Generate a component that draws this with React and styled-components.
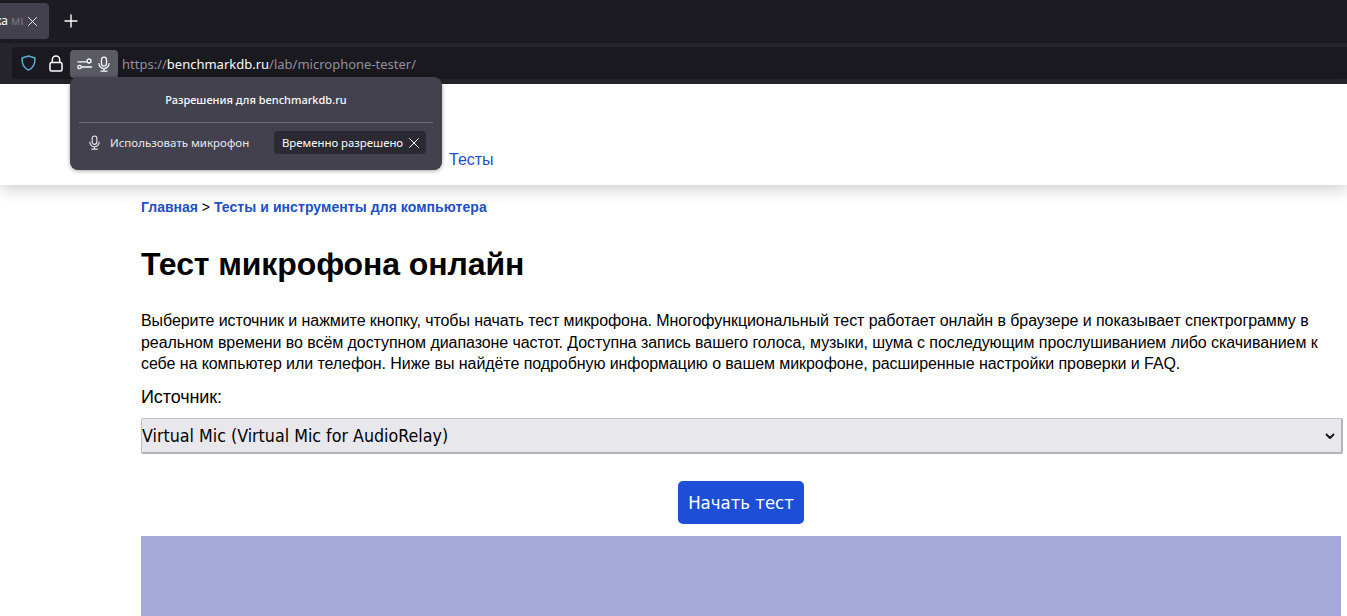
import React from "react";
import styled, { createGlobalStyle } from "styled-components";

const Global = createGlobalStyle`
  html, body { margin: 0; padding: 0; height: 100%; background: #fff; overflow: hidden; }
  body { font-family: "Liberation Sans", Arial, sans-serif; color: #000; }
  * { box-sizing: border-box; }
`;

const Page = styled.div`
  position: relative;
  width: 1347px;
  height: 616px;
  overflow: hidden;
`;

const Chrome = styled.div`
  height: 84px;
  background: #1c1b22;
  display: flex;
  flex-direction: column;
  font-family: "Noto Sans", sans-serif;
`;

const TabStrip = styled.div`
  height: 43px;
  display: flex;
  align-items: center;
  gap: 14px;
  padding-bottom: 1px;
`;

const Tab = styled.div`
  width: 49px;
  height: 36px;
  background: #42414d;
  border-radius: 0 4px 4px 0;
  display: flex;
  align-items: center;
  justify-content: flex-end;
  padding-right: 12px;
  gap: 5px;
  color: #fbfbfe;
  font-size: 12px;
  line-height: 16px;
  overflow: hidden;
  white-space: nowrap;
`;

const TabText = styled.span`
  flex-shrink: 0;
  display: flex;
  align-items: baseline;
  gap: 3px;
`;

const Fade = styled.span`
  display: block;
  width: 12px;
  overflow: hidden;
  color: #77767f;
`;

const PlusButton = styled.div`
  width: 16px;
  height: 16px;
  color: #fbfbfe;
  display: flex;
`;

const Toolbar = styled.div`
  height: 41px;
  background: #26252d;
  padding: 4px 0 5px 12px;
`;

const UrlBar = styled.div`
  height: 32px;
  background: #1a1920;
  border-radius: 4px 0 0 4px;
  display: flex;
  align-items: center;
  padding-left: 8px;
  font-size: 13px;
`;

const IconSlot = styled.span`
  display: flex;
  width: ${(p) => p.$w}px;
  padding-left: ${(p) => p.$shift || 0}px;
  justify-content: center;
  color: #fbfbfe;
`;

const PermButton = styled.div`
  width: 48px;
  height: 28px;
  margin: 2px 4px 0 0;
  background: #5b5b66;
  border-radius: 4px;
  display: flex;
  align-items: center;
  justify-content: space-around;
  padding: 0 4px 0 5px;
  color: #fbfbfe;
`;

const Url = styled.div`
  color: #8f8f9d;
  white-space: nowrap;
  padding-top: 1px;
`;

const Host = styled.span`
  color: #fbfbfe;
`;

const Popup = styled.div`
  position: absolute;
  left: 70px;
  top: 77px;
  width: 372px;
  height: 93px;
  background: #42414d;
  border-radius: 8px;
  box-shadow: 0 1px 4px rgba(0, 0, 0, 0.35);
  color: #fbfbfe;
  font-family: "Noto Sans", sans-serif;
  padding: 0 9px;
  display: flex;
  flex-direction: column;
`;

const PopupTitle = styled.div`
  height: 46px;
  border-bottom: 1px solid #6e6d78;
  display: flex;
  align-items: center;
  justify-content: center;
  font-size: 11px;
  font-weight: 500;
`;

const PopupRow = styled.div`
  flex: 1;
  display: flex;
  align-items: center;
  padding: 0 7px 8px 8px;
  font-size: 11.5px;
  justify-content: space-between;
`;

const PermLabel = styled.div`
  display: flex;
  align-items: center;
  gap: 8px;
  color: #e8e8ee;
`;

const PermState = styled.div`
  width: 152px;
  height: 23px;
  background: #2b2a33;
  border-radius: 4px;
  display: flex;
  align-items: center;
  justify-content: space-between;
  padding: 0 7px 0 8px;
  font-size: 11.35px;
  white-space: nowrap;
`;

const SiteHeader = styled.header`
  height: 101px;
  background: #fff;
  box-shadow: 0 4px 16px rgba(0, 0, 0, 0.2);
  padding: 66px 0 0 449px;
  position: relative;
`;

const NavLink = styled.a`
  color: #2150c4;
  font-size: 16px;
  line-height: 20px;
  display: block;
`;

const Main = styled.main`
  width: 1200px;
  margin-left: 141px;
  padding-top: 14px;
`;

const Crumbs = styled.div`
  font-size: 14px;
  font-weight: 400;
  line-height: 16px;
  white-space: nowrap;
`;

const CrumbLink = styled.a`
  color: #2150c4;
  font-weight: 700;
  letter-spacing: ${(p) => p.$spacing || 0}px;
`;

const Title = styled.h1`
  margin: 31px 0 0;
  font-size: 32px;
  line-height: 37px;
  font-weight: 700;
  letter-spacing: -0.1px;
`;

const Lead = styled.p`
  margin: 27px 0 0;
  font-size: 16px;
  line-height: 21.5px;
  width: 1200px;
  letter-spacing: -0.07px;
`;

const SourceLabel = styled.div`
  margin-top: 10px;
  font-size: 18px;
  line-height: 24px;
  letter-spacing: -0.1px;
`;

const SourceSelect = styled.div`
  margin-top: 9px;
  height: 36px;
  width: 1202px;
  background: #e8e8ec;
  border: 1px solid #c2c2c2;
  border-bottom: 2px solid #b4b4b4;
  border-right: 2px solid #b4b4b4;
  border-radius: 2px;
  display: flex;
  align-items: center;
  justify-content: space-between;
  font-family: "DejaVu Sans", sans-serif;
  font-stretch: condensed;
  font-size: 17.7px;
  padding: 1px 5px 0 0;
`;

const ButtonRow = styled.div`
  display: flex;
  justify-content: center;
  margin-top: 27px;
`;

const StartButton = styled.button`
  width: 126px;
  height: 43px;
  background: #1c4ed8;
  color: #fff;
  border: 0;
  border-radius: 5px;
  font-family: "DejaVu Sans", sans-serif;
  font-stretch: condensed;
  font-size: 18.4px;
  padding: 0;
`;

const Spectrogram = styled.div`
  margin-top: 12px;
  height: 120px;
  background: #a4a9d8;
`;

const Mic = ({ size = 16, weight = 1.2 }) => (
  <svg width={size} height={size} viewBox="0 0 16 16" fill="none" stroke="currentColor" strokeWidth={weight} strokeLinecap="round" style={{ flexShrink: 0 }}>
    <rect x="5.500" y="1" width="5" height="9" rx="2.500" />
    <path d="M3 7.500a5 5 0 0 0 10 0M8 12.500V15M5 15h6" />
  </svg>
);

const Close = ({ size = 10 }) => (
  <svg width={size} height={size} viewBox="0 0 10 10" fill="none" stroke="currentColor" strokeWidth="1" strokeLinecap="round" style={{ flexShrink: 0 }}>
    <path d="M.5.5l9 9M9.500.5l-9 9" />
  </svg>
);

const Plus = () => (
  <svg width="16" height="16" viewBox="0 0 16 16" fill="none" stroke="currentColor" strokeWidth="1.4" strokeLinecap="round">
    <path d="M8 2v12M2 8h12" />
  </svg>
);

const Shield = () => (
  <svg width="18" height="18" viewBox="0 0 18 18" fill="none" stroke="#57aed6" strokeWidth="1.6" strokeLinejoin="round">
    <path d="M9 1.500 15.800 3.800c.4 6-1.600 10.200-6.800 12.700C3.800 14 1.800 9.800 2.200 3.800z" />
  </svg>
);

const Lock = () => (
  <svg width="14" height="17" viewBox="0 0 14 17" fill="none" stroke="currentColor" strokeWidth="1.5">
    <rect x="1" y="7.500" width="12" height="8.500" rx="1.500" />
    <path d="M3.300 7.500V4.700a3.700 3.700 0 0 1 7.400 0v2.800" />
  </svg>
);

const Sliders = () => (
  <svg width="16" height="14" viewBox="0 0 16 14" fill="none" stroke="currentColor" strokeWidth="1.3" strokeLinecap="round">
    <path d="M1 4.800h8M5 10h9.500" />
    <circle cx="12" cy="4" r="2" />
    <circle cx="2.600" cy="10" r="1.700" />
  </svg>
);

const Chevron = () => (
  <svg width="12" height="12" viewBox="0 0 12 12" fill="none" stroke="#111" strokeWidth="1.8" strokeLinecap="round" strokeLinejoin="round">
    <path d="M2.500 4.500 6 8l3.500-3.500" />
  </svg>
);

export default function App() {
  return (
    <Page>
      <Global />
      <Chrome>
        <TabStrip>
          <Tab>
            <TabText>ка <Fade>ми</Fade></TabText>
            <Close size={9} />
          </Tab>
          <PlusButton><Plus /></PlusButton>
        </TabStrip>
        <Toolbar>
          <UrlBar>
            <IconSlot $w={17}><Shield /></IconSlot>
            <IconSlot $w={33} $shift={5}><Lock /></IconSlot>
            <PermButton>
              <Sliders />
              <Mic size={16} weight={1.25} />
            </PermButton>
            <Url>https://<Host>benchmarkdb.ru</Host>/lab/microphone-tester/</Url>
          </UrlBar>
        </Toolbar>
      </Chrome>
      <SiteHeader>
        <NavLink>Тесты</NavLink>
      </SiteHeader>
      <Main>
        <Crumbs>
          <CrumbLink>Главная</CrumbLink> &gt; <CrumbLink $spacing={0.07}>Тесты и инструменты для компьютера</CrumbLink>
        </Crumbs>
        <Title>Тест микрофона онлайн</Title>
        <Lead>
          Выберите источник и нажмите кнопку, чтобы начать тест микрофона. Многофункциональный тест работает онлайн в браузере и показывает спектрограмму в реальном времени во всём доступном диапазоне частот. Доступна запись вашего голоса, музыки, шума с последующим прослушиванием либо скачиванием к себе на компьютер или телефон. Ниже вы найдёте подробную информацию о вашем микрофоне, расширенные настройки проверки и FAQ.
        </Lead>
        <SourceLabel>Источник:</SourceLabel>
        <SourceSelect>
          <span>Virtual Mic (Virtual Mic for AudioRelay)</span>
          <Chevron />
        </SourceSelect>
        <ButtonRow>
          <StartButton>Начать тест</StartButton>
        </ButtonRow>
        <Spectrogram />
      </Main>
      <Popup>
        <PopupTitle>Разрешения для benchmarkdb.ru</PopupTitle>
        <PopupRow>
          <PermLabel>
            <Mic size={15} />
            <span>Использовать микрофон</span>
          </PermLabel>
          <PermState>
            <span>Временно разрешено</span>
            <Close size={10} />
          </PermState>
        </PopupRow>
      </Popup>
    </Page>
  );
}
